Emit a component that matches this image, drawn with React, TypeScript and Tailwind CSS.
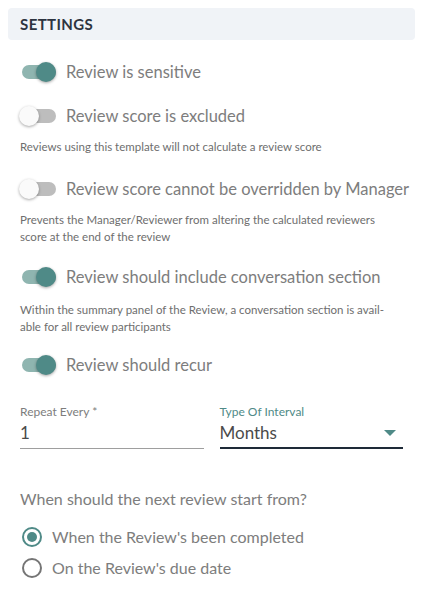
import React from "react";

function Toggle({ on }: { on: boolean }) {
  return (
    <div className={`relative w-[34px] h-[14px] rounded-full shrink-0 ${on ? "bg-[#8fb5b0]" : "bg-[#bdbdbd]"}`}>
      <div
        className={`absolute top-[-3px] w-5 h-5 rounded-full shadow-[0_1px_3px_rgba(0,0,0,0.35)] ${
          on ? "left-[14px] bg-[#4f8a87]" : "left-[-3px] bg-[#fafafa]"
        }`}
      />
    </div>
  );
}

function ToggleRow({ on, label }: { on: boolean; label: string }) {
  return (
    <div className="h-[44px] flex items-center pl-[2px]">
      <Toggle on={on} />
      <span className="ml-[10px] text-[16.5px] text-[#7d7d7d] leading-none whitespace-nowrap">{label}</span>
    </div>
  );
}

function Desc({ children }: { children: React.ReactNode }) {
  return <p className="text-[11.5px] leading-[17px] text-[#6e6e6e]">{children}</p>;
}

function Radio({ checked, label }: { checked: boolean; label: string }) {
  return (
    <div className="h-[31px] flex items-center pl-[2px]">
      <div
        className={`w-5 h-5 rounded-full border-2 flex items-center justify-center ${
          checked ? "border-[#4f8a87]" : "border-[#757575]"
        }`}
      >
        {checked && <div className="w-[10px] h-[10px] rounded-full bg-[#4f8a87]" />}
      </div>
      <span className="ml-[10px] text-[16px] text-[#7d7d7d]">{label}</span>
    </div>
  );
}

export default function App() {
  return (
    <div className="w-[427px] h-[597px] bg-white px-2 pt-2" style={{ fontFamily: 'Lato, "Noto Sans", sans-serif' }}>
      <div className="h-8 mr-1 rounded bg-[#f0f3f7] flex items-center px-3">
        <span className="text-[15px] font-bold text-[#2d3440] tracking-[0.4px]">SETTINGS</span>
      </div>
      <div className="pl-3 pr-4 pt-[10px]">
        <ToggleRow on={true} label="Review is sensitive" />
        <ToggleRow on={false} label="Review score is excluded" />
        <Desc>Reviews using this template will not calculate a review score</Desc>
        <div className="mt-[12px]">
          <ToggleRow on={false} label="Review score cannot be overridden by Manager" />
        </div>
        <Desc>
          Prevents the Manager/Reviewer from altering the calculated reviewers score at the end of the review
        </Desc>
        <div className="mt-[10px]">
          <ToggleRow on={true} label="Review should include conversation section" />
        </div>
        <div className="mt-[2px]">
          <Desc>
            Within the summary panel of the Review, a conversation section is avail-able for all review participants
          </Desc>
        </div>
        <div className="mt-[8px]">
          <ToggleRow on={true} label="Review should recur" />
        </div>
        <div className="mt-[17px] grid grid-cols-2 gap-4">
          <div className="border-b border-[#9e9e9e] pb-[3px]">
            <div className="text-[12px] leading-[16px] text-[#7d7d7d]">Repeat Every *</div>
            <div className="text-[17px] leading-[24px] text-[#4a4a4a] mt-[1px]">1</div>
          </div>
          <div className="border-b-2 border-[#1e2a38] pb-[2px] relative">
            <div className="text-[12px] leading-[16px] text-[#4f8a87]">Type Of Interval</div>
            <div className="flex items-center justify-between mt-[1px]">
              <span className="text-[17px] leading-[24px] text-[#4a4a4a]">Months</span>
              <svg width="12" height="6" viewBox="0 0 12 6" className="mr-[7px]">
                <path d="M0 0 L12 0 L6 6 Z" fill="#4f8a87" />
              </svg>
            </div>
          </div>
        </div>
        <div className="mt-[39px] text-[16px] text-[#7d7d7d] leading-[22px]">
          When should the next review start from?
        </div>
        <div className="mt-[11px]">
          <Radio checked={true} label="When the Review's been completed" />
          <Radio checked={false} label="On the Review's due date" />
        </div>
      </div>
    </div>
  );
}
